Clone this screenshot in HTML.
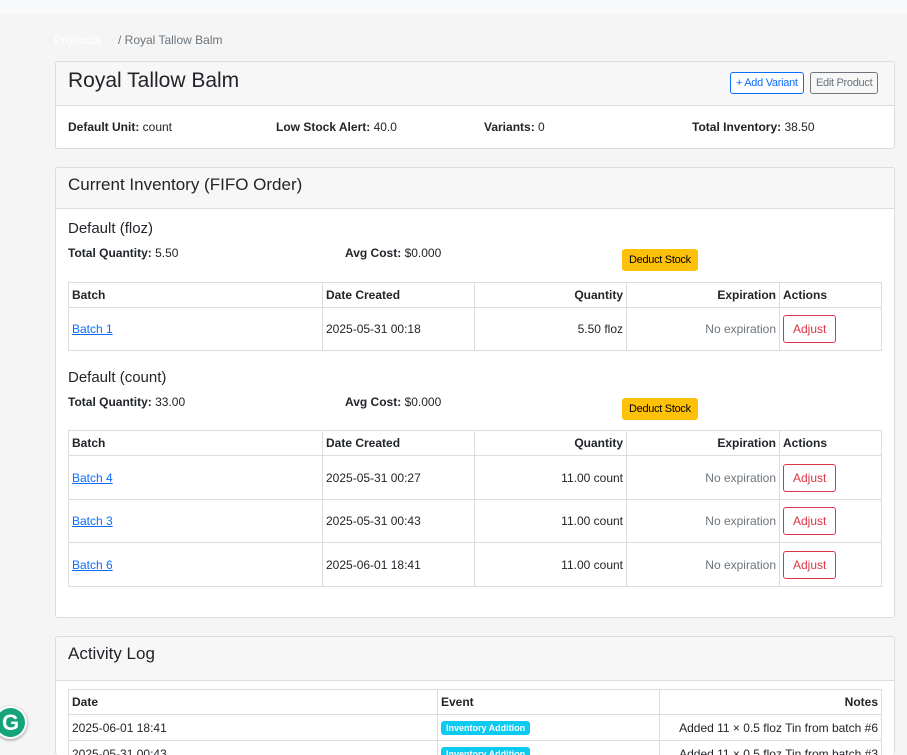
<!DOCTYPE html><html style="height:755px;overflow:hidden"><head><style>
*{box-sizing:border-box;margin:0;padding:0}
body{width:907px;height:755px;overflow:hidden;background:#f5f5f5;font-family:"Liberation Sans",sans-serif;color:#212529;font-size:12px;position:relative}
.a{position:absolute}
.card{position:absolute;left:55px;width:840px;background:#fff;border:1px solid #dcdcdc;border-radius:3px;overflow:hidden}
.hd{background:#f7f7f7;border-bottom:1px solid #dcdcdc;position:absolute;left:0;right:0;top:0}
table{position:absolute;border-collapse:collapse;font-size:12px}
td,th{border:1px solid #dcdcdc;padding:0 3px}
th{font-weight:bold;text-align:left}
.r{text-align:right}
a{color:#0d6efd;text-decoration:underline}
.adj{display:inline-block;border:1px solid #dc3545;color:#dc3545;border-radius:3px;padding:6px 9px;font-size:12px}
.ded{position:absolute;background:#ffc107;border-radius:3px;font-size:11px;padding:5px 7px;color:#000}
.badge{display:inline-block;background:#0dcaf0;color:#fff;font-size:9px;font-weight:bold;border-radius:3px;padding:2px 5px}
b{font-weight:bold}
</style></head><body>
<div class="a" style="left:0;top:0;width:907px;height:14px;background:#f8f9fa"></div>
<div class="a" style="left:54px;top:33px;color:#fff">Products</div>
<div class="a" style="left:118px;top:33px;color:#6c757d">/ Royal Tallow Balm</div>

<div class="card" style="top:61px;height:88px">
<div class="hd" style="height:44px"></div>
<div class="a" style="left:12px;top:7px;font-size:21px">Royal Tallow Balm</div>
<div class="a" style="left:674px;top:10px;border:1px solid #0d6efd;color:#0d6efd;border-radius:3px;padding:4px 5px;font-size:11px;background:#fff;letter-spacing:-0.3px">+ Add Variant</div>
<div class="a" style="left:754px;top:10px;border:1px solid #6c757d;color:#6c757d;border-radius:3px;padding:4px 5px;font-size:11px;letter-spacing:-0.3px">Edit Product</div>
<div class="a" style="left:12px;top:58px"><b>Default Unit:</b> count</div>
<div class="a" style="left:220px;top:58px"><b>Low Stock Alert:</b> 40.0</div>
<div class="a" style="left:428px;top:58px"><b>Variants:</b> 0</div>
<div class="a" style="left:636px;top:58px"><b>Total Inventory:</b> 38.50</div>
</div>

<div class="card" style="top:167px;height:451px">
<div class="hd" style="height:41px"></div>
<div class="a" style="left:12px;top:7px;font-size:17px">Current Inventory (FIFO Order)</div>
<div class="a" style="left:12px;top:52px;font-size:15px">Default (floz)</div>
<div class="a" style="left:12px;top:78px"><b>Total Quantity:</b> 5.50</div>
<div class="a" style="left:289px;top:78px"><b>Avg Cost:</b> $0.000</div>
<div class="ded" style="left:566px;top:81px;letter-spacing:-0.3px">Deduct Stock</div>
<div class="a" style="left:12px;top:201px;font-size:15px">Default (count)</div>
<div class="a" style="left:12px;top:227px"><b>Total Quantity:</b> 33.00</div>
<div class="a" style="left:289px;top:227px"><b>Avg Cost:</b> $0.000</div>
<div class="ded" style="left:566px;top:230px;letter-spacing:-0.3px">Deduct Stock</div>
</div>
<table style="left:68px;top:282px;width:814px">
<tr style="height:25px"><th style="width:254px">Batch</th><th style="width:152px">Date Created</th><th class="r" style="width:152px">Quantity</th><th class="r" style="width:153px">Expiration</th><th>Actions</th></tr>
<tr style="height:43px"><td><a>Batch 1</a></td><td>2025-05-31 00:18</td><td class="r">5.50 floz</td><td class="r" style="color:#6c757d">No expiration</td><td><span class="adj">Adjust</span></td></tr>
</table>
<table style="left:68px;top:430px;width:814px">
<tr style="height:25px"><th style="width:254px">Batch</th><th style="width:152px">Date Created</th><th class="r" style="width:152px">Quantity</th><th class="r" style="width:153px">Expiration</th><th>Actions</th></tr>
<tr style="height:44px"><td><a>Batch 4</a></td><td>2025-05-31 00:27</td><td class="r">11.00 count</td><td class="r" style="color:#6c757d">No expiration</td><td><span class="adj">Adjust</span></td></tr>
<tr style="height:43px"><td><a>Batch 3</a></td><td>2025-05-31 00:43</td><td class="r">11.00 count</td><td class="r" style="color:#6c757d">No expiration</td><td><span class="adj">Adjust</span></td></tr>
<tr style="height:44px"><td><a>Batch 6</a></td><td>2025-06-01 18:41</td><td class="r">11.00 count</td><td class="r" style="color:#6c757d">No expiration</td><td><span class="adj">Adjust</span></td></tr>
</table>

<div class="card" style="top:636px;height:119px;border-bottom:none">
<div class="hd" style="height:44px"></div>
<div class="a" style="left:12px;top:7px;font-size:17px">Activity Log</div>
</div>
<table style="left:68px;top:689px;width:814px">
<tr style="height:25px"><th style="width:369px">Date</th><th style="width:222px">Event</th><th class="r">Notes</th></tr>
<tr style="height:26px"><td>2025-06-01 18:41</td><td><span class="badge">Inventory Addition</span></td><td class="r">Added 11 × 0.5 floz Tin from batch #6</td></tr>
<tr style="height:26px"><td>2025-05-31 00:43</td><td><span class="badge">Inventory Addition</span></td><td class="r">Added 11 × 0.5 floz Tin from batch #3</td></tr>
</table>

<div class="a" style="left:-6px;top:706px;width:33px;height:33px;border-radius:50%;background:#fff;box-shadow:0 1px 3px rgba(0,0,0,.4)"></div>
<div class="a" style="left:-4px;top:708px;width:29px;height:29px;border-radius:50%;background:#15a37a;color:#fff;font-weight:bold;font-size:22px;line-height:29px;text-align:center">G</div>
</body></html>
